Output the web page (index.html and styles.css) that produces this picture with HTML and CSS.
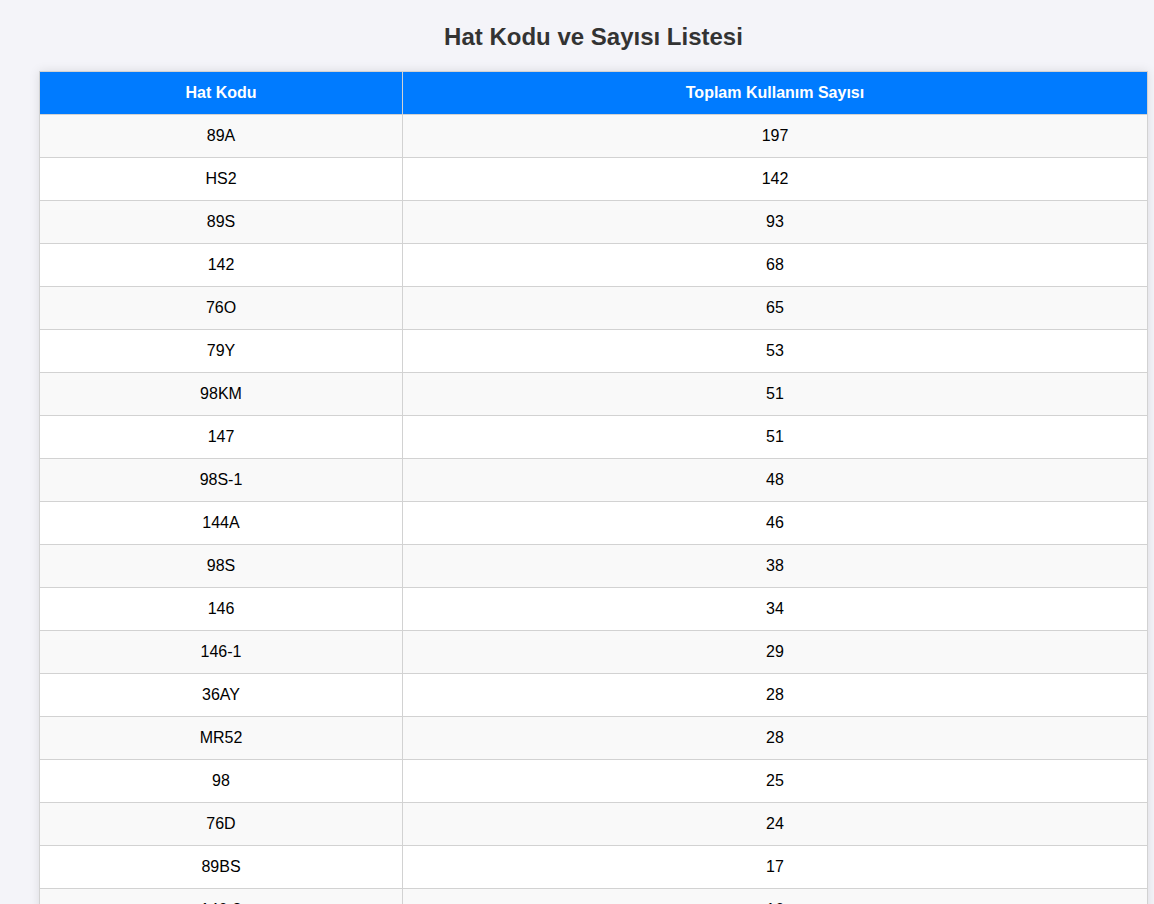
FILE: index.html
```html
<!DOCTYPE html>
<html lang="tr">
<head>
<meta charset="utf-8">
<title>Hat Kodu ve Sayısı Listesi</title>
<link rel="stylesheet" href="styles.css">
</head>
<body>
<div class="page">
  <h1 class="title">Hat Kodu ve Sayısı Listesi</h1>
  <table class="list">
    <tr><th class="col-code">Hat Kodu</th><th>Toplam Kullanım Sayısı</th></tr>
    <tr><td>89A</td><td>197</td></tr>
    <tr><td>HS2</td><td>142</td></tr>
    <tr><td>89S</td><td>93</td></tr>
    <tr><td>142</td><td>68</td></tr>
    <tr><td>76O</td><td>65</td></tr>
    <tr><td>79Y</td><td>53</td></tr>
    <tr><td>98KM</td><td>51</td></tr>
    <tr><td>147</td><td>51</td></tr>
    <tr><td>98S-1</td><td>48</td></tr>
    <tr><td>144A</td><td>46</td></tr>
    <tr><td>98S</td><td>38</td></tr>
    <tr><td>146</td><td>34</td></tr>
    <tr><td>146-1</td><td>29</td></tr>
    <tr><td>36AY</td><td>28</td></tr>
    <tr><td>MR52</td><td>28</td></tr>
    <tr><td>98</td><td>25</td></tr>
    <tr><td>76D</td><td>24</td></tr>
    <tr><td>89BS</td><td>17</td></tr>
    <tr><td>146-2</td><td>16</td></tr>
    <tr><td>76A</td><td>14</td></tr>
  </table>
</div>
</body>
</html>
```
FILE: styles.css
```css
html, body {
  margin: 0;
  padding: 0;
}
body {
  background: #f4f4f9;
  font-family: "Liberation Sans", Arial, sans-serif;
  color: #000;
}
.page {
  width: 1109px;
  margin-left: 39px;
  padding-top: 21px;
}
.title {
  margin: 0 0 18px;
  text-align: center;
  font-size: 24px;
  line-height: 32px;
  font-weight: bold;
  color: #333;
}
.list {
  width: 100%;
  border-collapse: collapse;
  background: #fff;
  box-shadow: 0 0 10px rgba(0, 0, 0, 0.1);
}
.list th,
.list td {
  border: 1px solid #d2d2d2;
  padding: 12px;
  text-align: center;
  font-size: 16px;
  line-height: 18px;
}
.list th {
  background: #007bff;
  color: #fff;
  font-weight: bold;
}
.list .col-code {
  width: 338px;
}
.list tr:nth-child(even) {
  background: #f9f9f9;
}
```
